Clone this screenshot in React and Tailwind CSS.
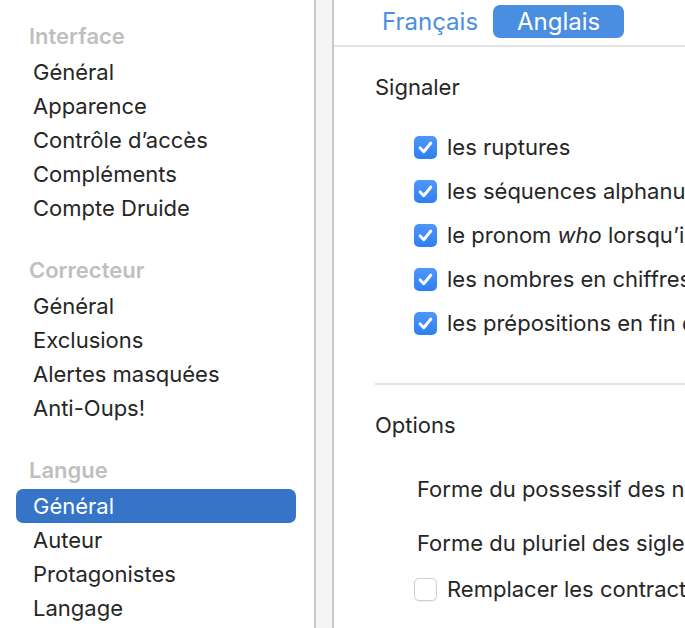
import React from "react";

const font = { fontFamily: "Inter, 'Noto Sans', sans-serif" };

function Check({ checked }) {
  if (checked) {
    return (
      <span className="flex h-[23px] w-[23px] shrink-0 items-center justify-center rounded-[5px] bg-gradient-to-b from-[#4d97f8] to-[#2f7ff1]">
        <svg width="17" height="17" viewBox="0 0 16 16" fill="none">
          <path d="M3 8.4 L6.4 12 L13 3.8" stroke="white" strokeWidth="2.8" strokeLinecap="round" strokeLinejoin="round" />
        </svg>
      </span>
    );
  }
  return (
    <span className="h-[23px] w-[23px] shrink-0 rounded-[5px] border border-[#cfcfcf] bg-white shadow-[0_1px_1px_rgba(0,0,0,0.06)]" />
  );
}

function Header({ children, first }) {
  return (
    <div className={`flex h-[34px] items-center pl-[13px] text-[22px] font-semibold text-[#bfbfbf] ${first ? "" : "mt-[28px]"} mb-[2px]`}>
      {children}
    </div>
  );
}

function Item({ children, selected }) {
  return (
    <div
      className={`flex h-[34px] items-center rounded-[7px] pl-[17px] text-[22px] ${
        selected ? "bg-[#3574c6] text-white" : "text-[#262626]"
      }`}
    >
      {children}
    </div>
  );
}

function CheckRow({ checked, children }) {
  return (
    <div className="flex h-[44px] items-center gap-[10px] pl-[39px]">
      <Check checked={checked} />
      <span className="whitespace-nowrap">{children}</span>
    </div>
  );
}

export default function App() {
  return (
    <div className="flex h-[628px] w-[685px] overflow-hidden bg-white text-[#262626]" style={font}>
      <aside className="w-[314px] shrink-0 bg-white pl-[16px] pr-[18px] pt-[19px]">
        <Header first>Interface</Header>
        <Item>Général</Item>
        <Item>Apparence</Item>
        <Item>Contrôle d’accès</Item>
        <Item>Compléments</Item>
        <Item>Compte Druide</Item>
        <Header>Correcteur</Header>
        <Item>Général</Item>
        <Item>Exclusions</Item>
        <Item>Alertes masquées</Item>
        <Item>Anti-Oups!</Item>
        <Header>Langue</Header>
        <Item selected>Général</Item>
        <Item>Auteur</Item>
        <Item>Protagonistes</Item>
        <Item>Langage</Item>
      </aside>
      <div className="w-[20px] shrink-0 border-x-2 border-[#c9c9c9] bg-[#f5f5f5]" />
      <main className="min-w-0 flex-1 overflow-hidden text-[22px]">
        <div className="flex h-[45px] items-start pl-[48px] pt-[5px]">
          <span className="flex h-[33px] items-center whitespace-nowrap text-[24px] text-[#4a8fe2]">Français</span>
          <span className="ml-[15px] flex h-[33px] w-[131px] shrink-0 items-center justify-center rounded-[7px] bg-[#4a8ee2] text-[24px] text-white">
            Anglais
          </span>
        </div>
        <div className="h-[2px] bg-[#e3e3e3]" />
        <div className="pl-[41px]">
          <div className="mt-[23px] flex h-[34px] items-center">Signaler</div>
          <div className="mt-[21px]">
            <CheckRow checked>les ruptures</CheckRow>
            <CheckRow checked>les séquences alphanumériques</CheckRow>
            <CheckRow checked>
              le pronom <i>who</i> lorsqu’il désigne un animal
            </CheckRow>
            <CheckRow checked>les nombres en chiffres</CheckRow>
            <CheckRow checked>les prépositions en fin de phrase</CheckRow>
          </div>
          <div className="mt-[38px] h-[2px] bg-[#e3e3e3]" />
          <div className="mt-[23px] flex h-[34px] items-center">Options</div>
          <div className="mt-[30px] flex h-[34px] items-center whitespace-nowrap pl-[42px]">
            Forme du possessif des noms propres
          </div>
          <div className="mt-[20px] flex h-[34px] items-center whitespace-nowrap pl-[42px]">
            Forme du pluriel des sigles
          </div>
          <div className="mt-[12px] flex h-[34px] items-center gap-[10px] pl-[39px]">
            <Check checked={false} />
            <span className="whitespace-nowrap">Remplacer les contractions</span>
          </div>
        </div>
      </main>
    </div>
  );
}
